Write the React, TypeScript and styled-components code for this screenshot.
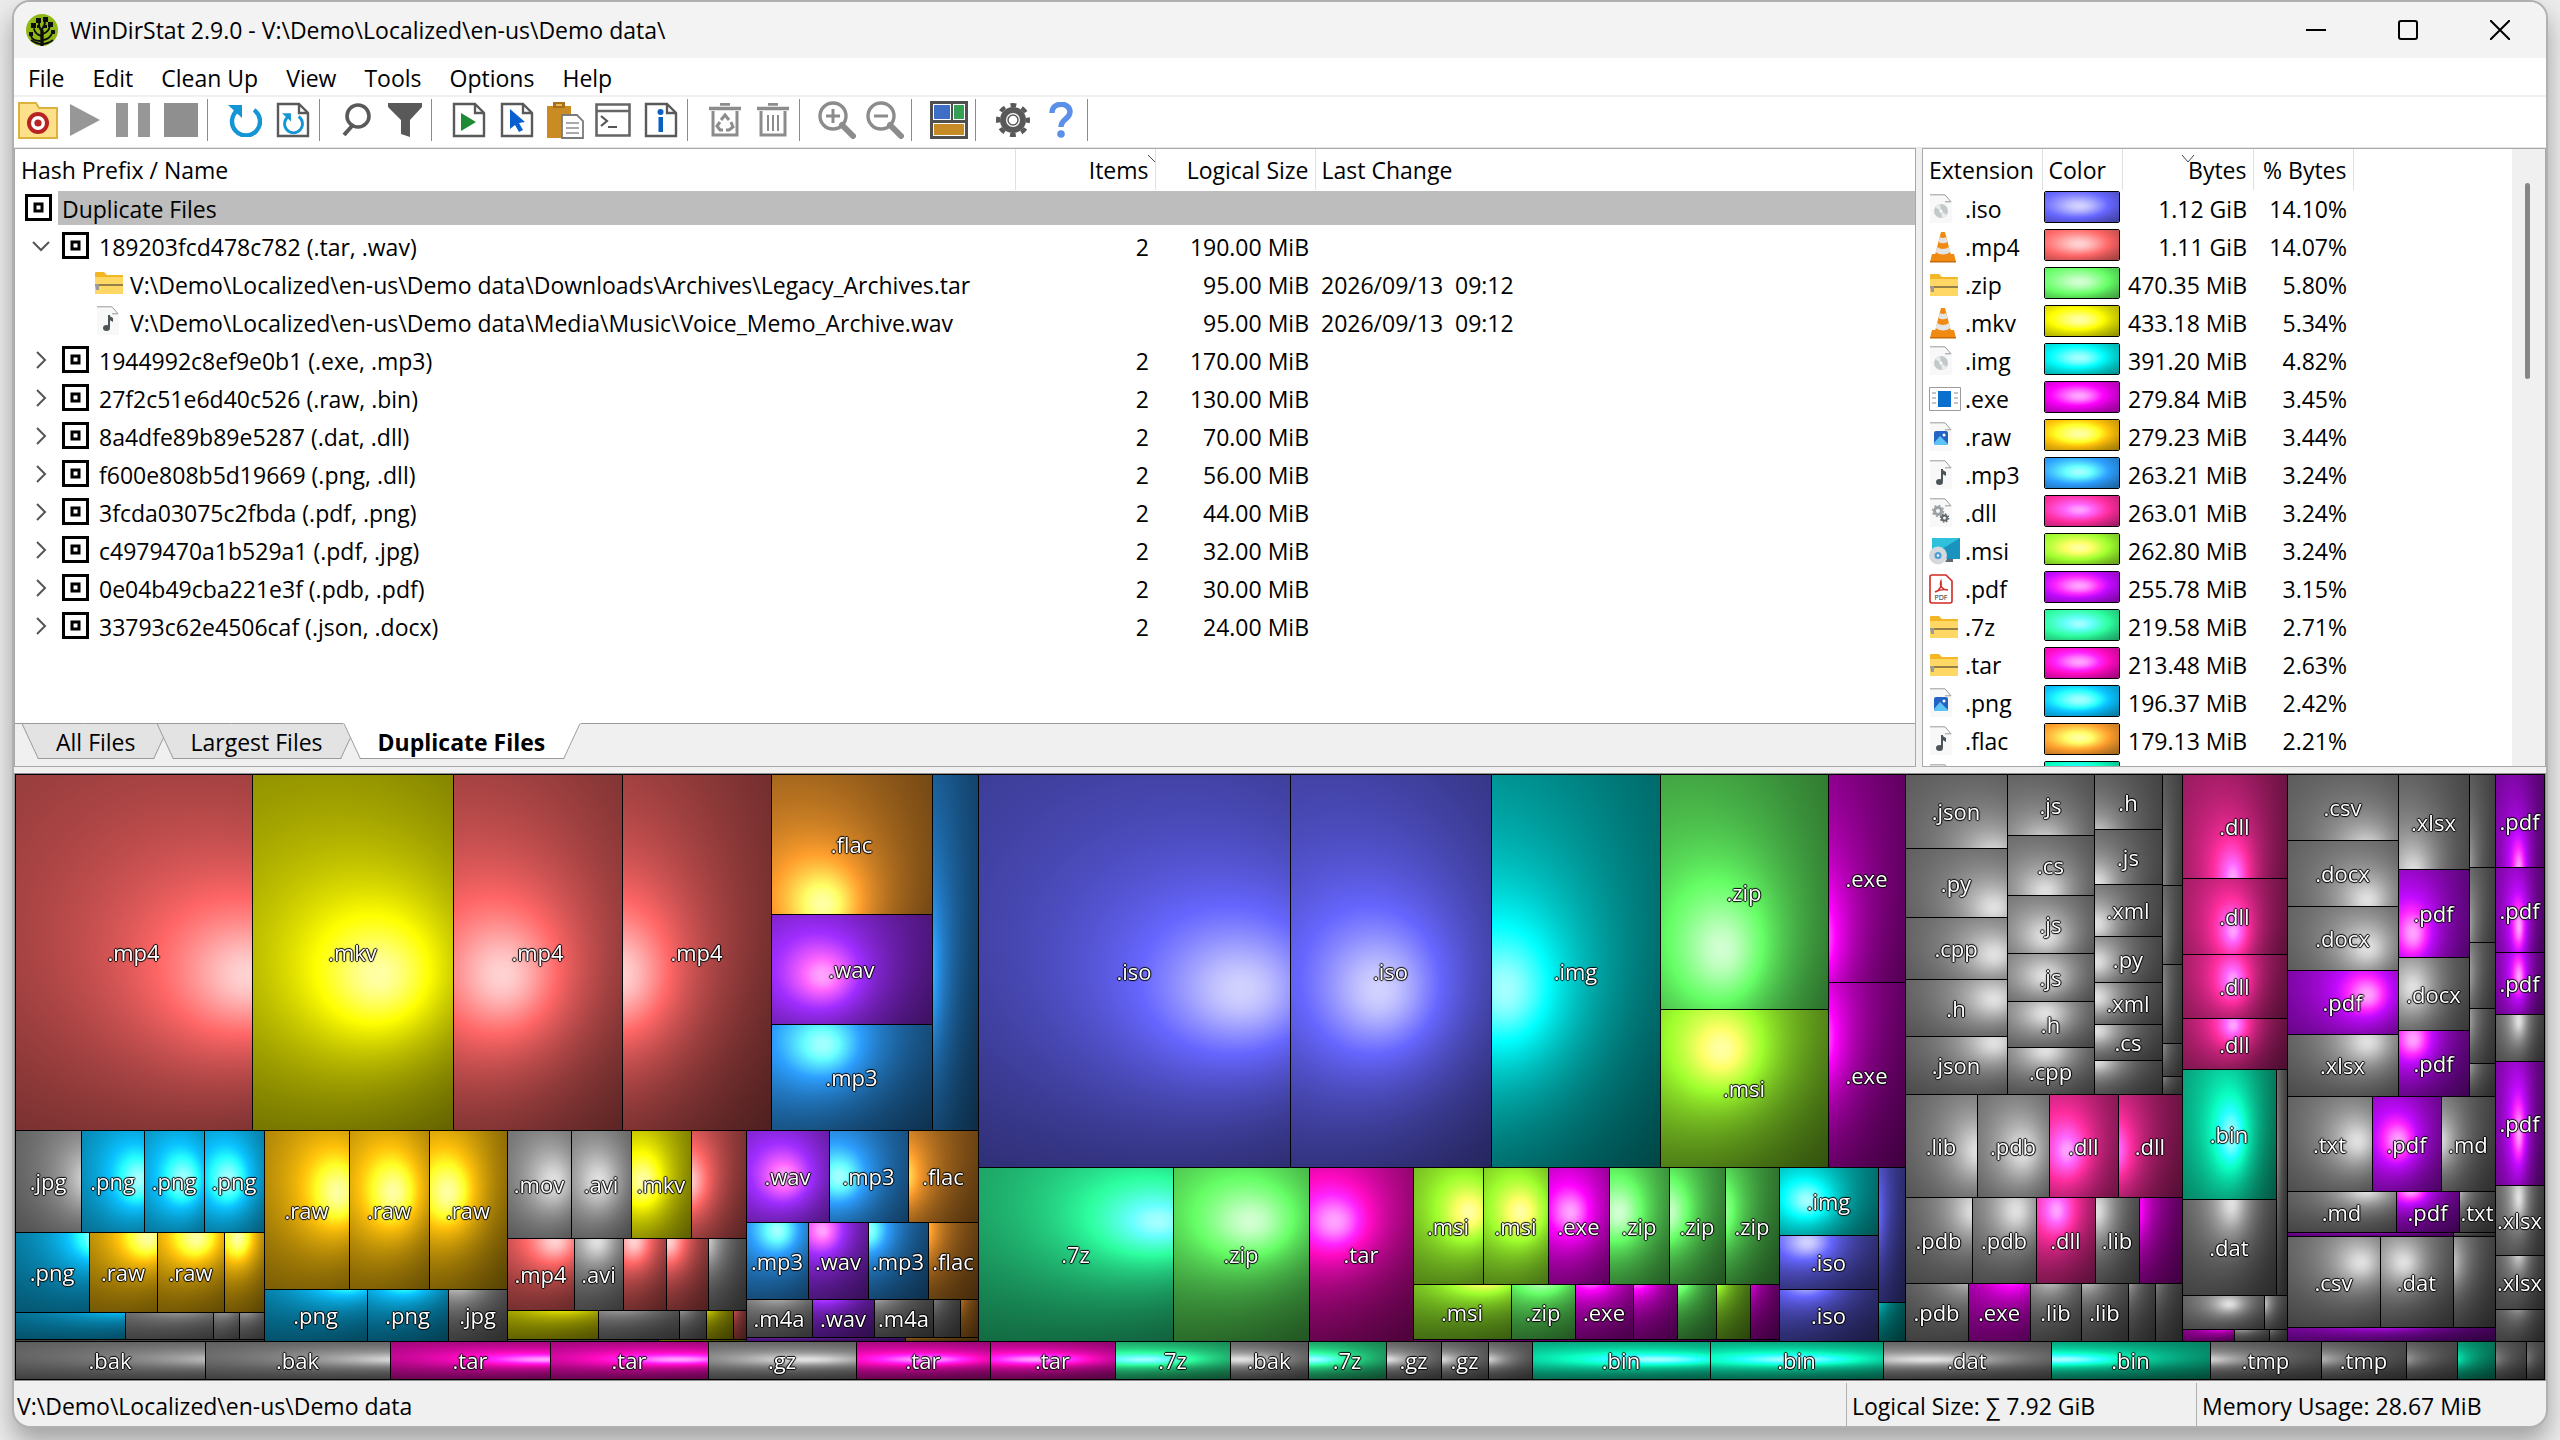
import React, { useLayoutEffect, useRef } from "react";
import styled, { createGlobalStyle, css } from "styled-components";

/* ---------- palette ---------- */

type RGB = [number, number, number];

const GREY: RGB = [153, 153, 153];

const EXT_COLORS: Record<string, RGB> = {
  iso: [102, 102, 255],
  mp4: [255, 102, 102],
  zip: [102, 255, 102],
  mkv: [230, 230, 0],
  img: [0, 230, 230],
  exe: [230, 0, 230],
  raw: [255, 194, 10],
  mp3: [45, 159, 255],
  dll: [255, 45, 159],
  msi: [159, 255, 45],
  pdf: [194, 10, 255],
  "7z": [45, 255, 159],
  tar: [255, 10, 194],
  png: [10, 194, 255],
  flac: [255, 159, 45],
  bin: [10, 255, 194],
  wav: [159, 45, 255],
};

const colorOf = (ext: string): RGB => EXT_COLORS[ext] ?? GREY;

/* ---------- cushion shading ---------- */

type Surface = [number, number, number, number];
type Box = { x: number; y: number; w: number; h: number };

const HEIGHT = 0.38;
const SCALE = 0.91;
const AMBIENT = 0.13;
const GAIN = 0.88 / 0.6;
const LIGHT_LEN = Math.sqrt(102);
const LX = -1 / LIGHT_LEN;
const LY = -1 / LIGHT_LEN;
const LZ = 10 / LIGHT_LEN;

function addRidge(s: Surface, b: Box, h: number): Surface {
  const wf = (4 * h) / b.w;
  const hf = (4 * h) / b.h;
  return [s[0] - wf, s[1] - hf, s[2] + wf * (2 * b.x + b.w), s[3] + hf * (2 * b.y + b.h)];
}

/* Spreads whatever exceeds 255 in one channel over the two others. */
function spill(c: RGB): RGB {
  const out: RGB = [c[0], c[1], c[2]];
  const top = out.indexOf(Math.max(...out));
  if (out[top] <= 255) return out;
  const half = (out[top] - 255) / 2;
  out[top] = 255;
  const a = (top + 1) % 3;
  const b = (top + 2) % 3;
  out[a] += half;
  out[b] += half;
  if (out[a] > 255) {
    out[b] += out[a] - 255;
    out[a] = 255;
  } else if (out[b] > 255) {
    out[a] += out[b] - 255;
    out[b] = 255;
  }
  return out;
}

function shade(data: Uint8ClampedArray, stride: number, b: Box, s: Surface, color: RGB) {
  for (let y = b.y; y < b.y + b.h; y++) {
    const ny = -(2 * s[1] * (y + 0.5) + s[3]);
    for (let x = b.x; x < b.x + b.w; x++) {
      const nx = -(2 * s[0] * (x + 0.5) + s[2]);
      const cosa = Math.min(1, Math.max(0, (nx * LX + ny * LY + LZ) / Math.sqrt(nx * nx + ny * ny + 1)));
      const p = ((1 - AMBIENT) * cosa + AMBIENT) * GAIN;
      const c = spill([color[0] * p, color[1] * p, color[2] * p]);
      const i = (y * stride + x) * 4;
      data[i] = c[0];
      data[i + 1] = c[1];
      data[i + 2] = c[2];
      data[i + 3] = 255;
    }
  }
}

/* ---------- treemap data ---------- */

type TreeNode = {
  kind: "leaf" | "strip" | "folder";
  size: number;
  ext?: string;
  label?: boolean;
  across?: boolean;
  children?: TreeNode[];
};

const file = (size: number, ext: string): TreeNode => ({ kind: "leaf", size, ext, label: true });
const tiny = (size: number, ext = ""): TreeNode => ({ kind: "leaf", size, ext });
const row = (size: number, ...children: TreeNode[]): TreeNode => ({ kind: "strip", size, across: true, children });
const column = (size: number, ...children: TreeNode[]): TreeNode => ({ kind: "strip", size, children });
const wideDir = (size: number, ...children: TreeNode[]): TreeNode => ({ kind: "folder", size, across: true, children });
const tallDir = (size: number, ...children: TreeNode[]): TreeNode => ({ kind: "folder", size, children });

const media = tallDir(
  963,
  row(
    356,
    wideDir(756, file(237, "mp4"), file(201, "mkv"), file(169, "mp4"), file(149, "mp4")),
    wideDir(207, column(161, file(140, "flac"), file(110, "wav"), file(106, "mp3")), tiny(46, "mp3")),
  ),
  row(
    211,
    tallDir(
      249,
      row(102, file(66, "jpg"), file(63, "png"), file(60, "png"), file(60, "png")),
      row(80, file(74, "png"), file(68, "raw"), file(67, "raw"), tiny(40, "raw")),
      row(27, tiny(110, "png"), tiny(88), tiny(26), tiny(25)),
      row(2, tiny(249)),
    ),
    tallDir(
      243,
      row(159, file(85, "raw"), file(80, "raw"), file(78, "raw")),
      row(52, file(103, "png"), file(81, "png"), file(59, "jpg")),
    ),
    tallDir(
      239,
      row(108, file(64, "mov"), file(60, "avi"), file(60, "mkv"), tiny(55, "mp4")),
      row(72, file(67, "mp4"), file(49, "avi"), tiny(43, "mp4"), tiny(42, "mp4"), tiny(38)),
      row(29, tiny(91, "mkv"), tiny(81), tiny(27), tiny(27, "mkv"), tiny(13, "mp4")),
      row(2, tiny(151), tiny(88, "mkv")),
    ),
    tallDir(
      232,
      row(92, file(83, "wav"), file(79, "mp3"), file(70, "flac")),
      row(77, file(62, "mp3"), file(60, "wav"), file(60, "mp3"), file(50, "flac")),
      row(38, file(66, "m4a"), file(62, "wav"), file(59, "m4a"), tiny(27), tiny(18, "flac")),
      row(4, tiny(159, "wav"), tiny(73, "flac")),
    ),
  ),
);

const software = tallDir(
  927,
  row(
    393,
    wideDir(682, file(312, "iso"), file(201, "iso"), file(169, "img")),
    wideDir(
      245,
      column(168, file(235, "zip"), file(158, "msi")),
      column(77, file(208, "exe"), file(185, "exe")),
    ),
  ),
  row(
    174,
    wideDir(435, file(195, "7z"), file(136, "zip"), file(104, "tar")),
    tallDir(
      366,
      row(117, file(70, "msi"), file(65, "msi"), file(61, "exe"), file(60, "zip"), file(56, "zip"), file(54, "zip")),
      row(55, file(98, "msi"), file(64, "zip"), file(58, "exe"), tiny(44, "exe"), tiny(39, "zip"), tiny(34, "msi"), tiny(29, "exe")),
      row(2, tiny(366, "exe")),
    ),
    wideDir(
      126,
      column(99, file(68, "img"), file(54, "iso"), file(52, "iso")),
      column(27, tiny(135, "iso"), tiny(39, "img")),
    ),
  ),
);

const development = tallDir(
  277,
  wideDir(
    320,
    column(102, file(74, "json"), file(69, "py"), file(62, "cpp"), file(57, "h"), file(58, "json")),
    column(87, file(61, "js"), file(60, "cs"), file(58, "js"), file(48, "js"), file(46, "h"), file(47, "cpp")),
    column(68, file(55, "h"), file(55, "js"), file(52, "xml"), file(46, "py"), file(42, "xml"), file(36, "cs"), tiny(34)),
    column(20, tiny(111), tiny(79), tiny(79), tiny(33), tiny(18)),
  ),
  tallDir(
    247,
    row(103, file(72, "lib"), file(72, "pdb"), file(69, "dll"), file(64, "dll")),
    row(86, file(67, "pdb"), file(64, "pdb"), file(59, "dll"), file(44, "lib"), tiny(43, "exe")),
    row(58, file(63, "pdb"), file(62, "exe"), file(51, "lib"), file(47, "lib"), tiny(27), tiny(27)),
  ),
);

const system = tallDir(
  105,
  tallDir(295, file(104, "dll"), file(76, "dll"), file(64, "dll"), file(51, "dll")),
  wideDir(226, column(94, file(130, "bin"), file(96, "dat")), tiny(11)),
  tallDir(46, row(34, tiny(82), tiny(23)), row(12, tiny(52, "exe"), tiny(35), tiny(18))),
);

const documents = tallDir(
  208,
  wideDir(
    322,
    column(111, file(66, "csv"), file(66, "docx"), file(64, "docx"), file(64, "pdf"), file(62, "xlsx")),
    column(71, file(95, "xlsx"), file(88, "pdf"), file(73, "docx"), file(66, "pdf")),
    column(26, tiny(93), tiny(75), tiny(66), tiny(55), tiny(33)),
  ),
  tallDir(
    140,
    row(95, file(85, "txt"), file(69, "pdf"), file(54, "md")),
    row(41, file(109, "md"), file(63, "pdf"), file(36, "txt")),
    row(4, tiny(166, "pdf"), tiny(42)),
  ),
  tallDir(105, row(91, file(93, "csv"), file(73, "dat"), tiny(42)), row(14, tiny(208, "pdf"))),
);

const reports = tallDir(
  49,
  tallDir(287, file(93, "pdf"), file(85, "pdf"), file(62, "pdf"), tiny(47)),
  tallDir(280, file(124, "pdf"), file(70, "xlsx"), file(54, "xlsx"), tiny(32)),
);

const archives = wideDir(
  38,
  wideDir(
    1517,
    file(190, "bak"),
    file(185, "bak"),
    file(160, "tar"),
    file(158, "tar"),
    file(148, "gz"),
    file(134, "tar"),
    file(125, "tar"),
    file(115, "7z"),
    file(78, "bak"),
    file(78, "7z"),
    file(55, "gz"),
    file(47, "gz"),
    tiny(44),
  ),
  wideDir(
    1012,
    file(178, "bin"),
    file(173, "bin"),
    file(168, "dat"),
    file(159, "bin"),
    file(111, "tmp"),
    file(85, "tmp"),
    tiny(51),
    tiny(38, "bin"),
    tiny(31),
    tiny(18),
  ),
);

const TREE: TreeNode[] = [row(567, media, software, development, system, documents, reports), archives];

/* ---------- list data ---------- */

type Entry = {
  name: string;
  icon: "group" | "zip" | "music";
  level: 0 | 1 | 2;
  open?: boolean;
  items?: string;
  size?: string;
  changed?: string;
};

const group = (name: string, size: string, open = false): Entry => ({ name, icon: "group", level: 1, open, items: "2", size });

const ENTRIES: Entry[] = [
  { name: "Duplicate Files", icon: "group", level: 0 },
  group("189203fcd478c782 (.tar, .wav)", "190.00 MiB", true),
  {
    name: "V:\\Demo\\Localized\\en-us\\Demo data\\Downloads\\Archives\\Legacy_Archives.tar",
    icon: "zip",
    level: 2,
    size: "95.00 MiB",
    changed: "2026/09/13  09:12",
  },
  {
    name: "V:\\Demo\\Localized\\en-us\\Demo data\\Media\\Music\\Voice_Memo_Archive.wav",
    icon: "music",
    level: 2,
    size: "95.00 MiB",
    changed: "2026/09/13  09:12",
  },
  group("1944992c8ef9e0b1 (.exe, .mp3)", "170.00 MiB"),
  group("27f2c51e6d40c526 (.raw, .bin)", "130.00 MiB"),
  group("8a4dfe89b89e5287 (.dat, .dll)", "70.00 MiB"),
  group("f600e808b5d19669 (.png, .dll)", "56.00 MiB"),
  group("3fcda03075c2fbda (.pdf, .png)", "44.00 MiB"),
  group("c4979470a1b529a1 (.pdf, .jpg)", "32.00 MiB"),
  group("0e04b49cba221e3f (.pdb, .pdf)", "30.00 MiB"),
  group("33793c62e4506caf (.json, .docx)", "24.00 MiB"),
];

type ExtIcon = "disc" | "vlc" | "zip" | "exe" | "picture" | "music" | "gears" | "msi" | "pdf";

const EXTENSIONS: [string, ExtIcon, string, string][] = [
  ["iso", "disc", "1.12 GiB", "14.10%"],
  ["mp4", "vlc", "1.11 GiB", "14.07%"],
  ["zip", "zip", "470.35 MiB", "5.80%"],
  ["mkv", "vlc", "433.18 MiB", "5.34%"],
  ["img", "disc", "391.20 MiB", "4.82%"],
  ["exe", "exe", "279.84 MiB", "3.45%"],
  ["raw", "picture", "279.23 MiB", "3.44%"],
  ["mp3", "music", "263.21 MiB", "3.24%"],
  ["dll", "gears", "263.01 MiB", "3.24%"],
  ["msi", "msi", "262.80 MiB", "3.24%"],
  ["pdf", "pdf", "255.78 MiB", "3.15%"],
  ["7z", "zip", "219.58 MiB", "2.71%"],
  ["tar", "zip", "213.48 MiB", "2.63%"],
  ["png", "picture", "196.37 MiB", "2.42%"],
  ["flac", "music", "179.13 MiB", "2.21%"],
  ["bin", "disc", "", ""],
];

/* ---------- styles ---------- */

const GlobalStyle = createGlobalStyle`
  *, *::before, *::after { box-sizing: border-box; }
  body {
    margin: 0;
    background: #ececec;
    color: #000;
    font: 23px/30px "Open Sans", "Noto Sans", sans-serif;
    overflow: hidden;
  }
  button { font: inherit; color: inherit; background: none; border: 0; padding: 0; }
  table { border-collapse: collapse; border-spacing: 0; table-layout: fixed; }
  th { font-weight: 400; }
  svg { display: block; flex: none; }
`;

const Desktop = styled.div`
  height: 100vh;
  padding: 0 12px 12px;
`;

const Window = styled.main`
  display: flex;
  flex-direction: column;
  height: 100%;
  border: 2px solid #b0b0b0;
  border-radius: 18px;
  background: #f0f0f0;
  box-shadow: 0 14px 26px rgba(0, 0, 0, 0.32);
  overflow: hidden;
`;

const TitleBar = styled.header`
  display: flex;
  align-items: center;
  gap: 12px;
  height: 56px;
  padding-left: 12px;
  background: #f3f3f3;
`;

const Title = styled.h1`
  flex: 1;
  margin: 0;
  font-size: 23px;
  font-weight: 400;
`;

const CaptionButtons = styled.div`
  display: flex;
`;

const CaptionButton = styled.button`
  display: grid;
  place-items: center;
  width: 92px;
  height: 56px;
`;

const MenuBar = styled.nav`
  display: flex;
  height: 39px;
  background: #fff;
  border-bottom: 2px solid #f0f0f0;
`;

const MenuItem = styled.button`
  padding: 2px 14px 0;
`;

const Toolbar = styled.div`
  display: flex;
  align-items: center;
  height: 51px;
  padding-bottom: 4px;
  background: #fff;
  border-bottom: 1px solid #e6e6e6;
`;

const ToolButton = styled.button`
  display: grid;
  place-items: center;
  width: 48px;
  height: 46px;
  &:first-child {
    width: 47px;
  }
`;

const Divider = styled.span`
  width: 16px;
  height: 42px;
  padding-left: 2px;
  &::before {
    content: "";
    display: block;
    width: 1px;
    height: 100%;
    background: #8c8c8c;
  }
`;

const Workspace = styled.div`
  flex: 1;
  display: grid;
  grid-template-rows: minmax(0, 619fr) minmax(0, 608fr);
  gap: 6px;
  min-height: 0;
`;

const Panes = styled.div`
  display: grid;
  grid-template-columns: 1902fr 624fr;
  gap: 6px;
  min-height: 0;
`;

const Pane = styled.section`
  display: flex;
  flex-direction: column;
  min-width: 0;
  min-height: 0;
  border: 1px solid #a8a8a8;
  background: #fff;
  overflow: hidden;
`;

const ListArea = styled.div`
  flex: 1;
  min-height: 0;
  overflow: hidden;
`;

const Table = styled.table`
  width: 100%;
`;

const Col = styled.col<{ $width?: number }>`
  width: ${(p) => (p.$width ? `${p.$width}px` : "auto")};
`;

const Head = styled.th<{ $right?: boolean }>`
  position: relative;
  height: 41px;
  padding: 1px 6px 0;
  text-align: ${(p) => (p.$right ? "right" : "left")};
  border-right: 1px solid #e0e0e0;
  white-space: nowrap;
  &:last-child { border-right-color: ${(p) => (p.$right ? "#e0e0e0" : "transparent")}; }
`;

const SortMark = styled.svg<{ $at: string }>`
  position: absolute;
  top: 6px;
  left: ${(p) => p.$at};
`;

const Cell = styled.td<{ $right?: boolean; $selected?: boolean }>`
  height: 38px;
  padding: 0 6px;
  text-align: ${(p) => (p.$right ? "right" : "left")};
  white-space: pre;
  ${(p) =>
    p.$selected &&
    css`
      background: linear-gradient(#bdbdbd, #bdbdbd) 0 1px / 100% 34px no-repeat;
    `}
`;

const NameCell = styled(Cell)`
  padding: 0;
`;

const NameLine = styled.div<{ $level: number }>`
  display: flex;
  align-items: center;
  height: 38px;
  padding-left: ${(p) => [9, 9, 79][p.$level]}px;
`;

const Toggle = styled.button`
  display: grid;
  place-items: center;
  width: 37px;
  height: 30px;
  padding: 0 3px 2px 0;
`;

const IconSlot = styled.span<{ $wide?: boolean }>`
  display: grid;
  place-items: center;
  width: 28px;
  margin-right: ${(p) => (p.$wide ? 10 : 8)}px;
  padding-bottom: 4px;
`;

const NameText = styled.span<{ $selected?: boolean }>`
  ${(p) =>
    p.$selected &&
    css`
      flex: 1;
      height: 34px;
      margin: -2px 0 0 -4px;
      padding: 3px 0 0 4px;
      background: #bdbdbd;
    `}
`;

const Tabs = styled.div`
  display: flex;
  gap: 19px;
  height: 43px;
  padding-left: 23px;
  border-top: 1px solid #9a9a9a;
  background: #f0f0f0;
`;

const Tab = styled.button<{ $active?: boolean }>`
  position: relative;
  isolation: isolate;
  height: 36px;
  margin-top: -1px;
  padding: 2px 18px 0;
  font-weight: ${(p) => (p.$active ? 700 : 400)};
  &::before,
  &::after {
    content: "";
    position: absolute;
    z-index: -1;
    top: 0;
    bottom: 0;
    background: ${(p) => (p.$active ? "#fff" : "#e3e3e3")};
    border: 1px solid #9a9a9a;
    border-top-color: ${(p) => (p.$active ? "#fff" : "#9a9a9a")};
    transform-origin: bottom;
  }
  &::before {
    left: 0;
    right: 25%;
    border-right: 0;
    transform: skewX(25deg);
  }
  &::after {
    left: 25%;
    right: 0;
    border-left: 0;
    transform: skewX(-25deg);
  }
`;

const ExtBody = styled.div`
  flex: 1;
  display: flex;
  min-height: 0;
`;

const ExtTable = styled.table`
  width: 430px;
`;

const ExtScroller = styled.div`
  flex: 1;
  overflow: hidden;
`;

const ScrollTrack = styled.div`
  width: 33px;
  padding: 34px 13px 0;
  background: #f0f0f0;
`;

const ScrollThumb = styled.div`
  width: 5px;
  height: 196px;
  border-radius: 3px;
  background: #868686;
`;

const ExtName = styled.div`
  display: grid;
  grid-template-columns: 34px 1fr;
  align-items: center;
  gap: 2px;
`;

const Swatch = styled.canvas`
  display: block;
  width: 76px;
  height: 32px;
  margin-top: -4px;
  border: 1px solid #000;
  border-radius: 2px;
`;

const SwatchCell = styled(Cell)`
  padding: 0 2px;
`;

const MapFrame = styled.section`
  position: relative;
  min-height: 0;
  border: 1px solid #8f8f8f;
  padding: 0 1px 1px 0;
  background: #000;
`;

const MapCanvas = styled.canvas`
  position: absolute;
  inset: 0;
`;

const MapTree = styled.div`
  position: relative;
  display: flex;
  flex-direction: column;
  width: 100%;
  height: 100%;
`;

const Branch = styled.div<{ $size: number; $across?: boolean }>`
  display: flex;
  flex: ${(p) => p.$size} 1 0;
  flex-direction: ${(p) => (p.$across ? "row" : "column")};
  min-width: 0;
  min-height: 0;
`;

const Leaf = styled.div<{ $size: number }>`
  display: flex;
  align-items: center;
  justify-content: center;
  flex: ${(p) => p.$size} 1 0;
  min-width: 0;
  min-height: 0;
  overflow: hidden;
  color: #fff;
  font-size: 22px;
  text-shadow: 1px 0 1px #000, -1px 0 1px #000, 0 1px 1px #000, 0 -1px 1px #000;
`;

const StatusBar = styled.footer`
  display: grid;
  grid-template-columns: 1fr 350px 350px;
  height: 45px;
  padding-top: 2px;
`;

const StatusCell = styled.span<{ $line?: boolean }>`
  padding: 8px 0 0 ${(p) => (p.$line ? 5 : 3)}px;
  border-left: ${(p) => (p.$line ? "1px solid #b0b0b0" : "0")};
`;

/* ---------- icons ---------- */

const LogoIcon = () => (
  <svg width="32" height="32" viewBox="0 0 32 32">
    <circle cx="16" cy="16" r="16" fill="#8fb816" />
    <g fill="none" stroke="#0d0d0d" strokeLinecap="round">
      <path d="M16 31V17" strokeWidth="3.4" />
      <path d="M16 22c-5-1-7-3-8-7M16 20c5-1 7-4 8-8M16 17c-3-2-3-5-3-9M16 15c2-2 3-5 3-8M16 26c5 0 9-3 10-7M14 27c-5 0-8-2-9-5" strokeWidth="1.8" />
    </g>
    <g fill="#0d0d0d">
      <rect x="5" y="9" width="5" height="5" />
      <rect x="10" y="4" width="5" height="5" />
      <rect x="17" y="3" width="5" height="5" />
      <rect x="22" y="8" width="5" height="5" />
      <rect x="3" y="18" width="4" height="4" />
      <rect x="25" y="16" width="4" height="4" />
      <rect x="11" y="11" width="3" height="3" />
      <rect x="18" y="11" width="3" height="3" />
    </g>
    <path d="M5 26q11 8 22 0" fill="none" stroke="#0d0d0d" strokeWidth="1.6" />
  </svg>
);

const Sheet = ({ children }: { children?: React.ReactNode }) => (
  <svg width="34" height="36" viewBox="0 0 34 36">
    <path d="M2 2h21l9 9v23H2z" fill="#fff" stroke="#595959" strokeWidth="2.4" />
    <path d="M23 2v9h9" fill="none" stroke="#595959" strokeWidth="2.4" />
    {children}
  </svg>
);

const RefreshArrow = () => (
  <>
    <path d="M10 7A14 14 0 1 0 26 7" fill="none" stroke="#1496d6" strokeWidth="4.4" />
    <path d="M0 2h14v13z" fill="#1496d6" />
  </>
);

const TOOL_ICONS: Record<string, React.ReactNode> = {
  "Open folder": (
    <svg width="40" height="38" viewBox="0 0 40 38">
      <path d="M1 2h17l3 5h18v30H1z" fill="#ffe08a" stroke="#dcb13c" strokeWidth="2" />
      <circle cx="20" cy="22" r="11" fill="#b92222" />
      <circle cx="20" cy="22" r="7" fill="#fff" />
      <circle cx="20" cy="22" r="3.6" fill="#b92222" />
    </svg>
  ),
  Resume: (
    <svg width="30" height="32" viewBox="0 0 30 32">
      <path d="M0 0l30 16L0 32z" fill="#979797" />
    </svg>
  ),
  Pause: (
    <svg width="34" height="34" viewBox="0 0 34 34">
      <path d="M0 0h12v34H0zM22 0h12v34H22z" fill="#979797" />
    </svg>
  ),
  Stop: (
    <svg width="34" height="34" viewBox="0 0 34 34">
      <path d="M0 0h34v34H0z" fill="#8f8f8f" />
    </svg>
  ),
  "Refresh all": (
    <svg width="34" height="34" viewBox="0 0 34 34">
      <RefreshArrow />
    </svg>
  ),
  "Refresh selected": (
    <Sheet>
      <g transform="translate(6 10) scale(.64)">
        <RefreshArrow />
      </g>
    </Sheet>
  ),
  Search: (
    <svg width="30" height="34" viewBox="0 0 30 34">
      <circle cx="16" cy="13" r="11" fill="none" stroke="#595959" strokeWidth="3.6" />
      <path d="M10 23L2 32" stroke="#595959" strokeWidth="4" />
    </svg>
  ),
  Filter: (
    <svg width="34" height="34" viewBox="0 0 34 34">
      <path d="M0 0h34v4L22 17v17l-9-3V17L0 4z" fill="#595959" />
    </svg>
  ),
  Open: (
    <Sheet>
      <path d="M9 11l15 9-15 9z" fill="#1f8a35" />
    </Sheet>
  ),
  Select: (
    <Sheet>
      <path d="M10 7v20l5-4 4 7 4-2-4-7 6-1z" fill="#0a5fd0" />
    </Sheet>
  ),
  Copy: (
    <svg width="38" height="38" viewBox="0 0 38 38">
      <path d="M1 5h24v32H1z" fill="#c98b22" />
      <path d="M7 1h12v6H7z" fill="#a8701a" />
      <path d="M10 3h6v2h-6z" fill="#e6b85a" />
      <path d="M16 14h15l6 6v17H16z" fill="#fff" stroke="#7a7a7a" strokeWidth="1.8" />
      <path d="M20 22h13M20 27h13M20 32h13" stroke="#a9a9a9" strokeWidth="1.8" />
    </svg>
  ),
  "Command prompt": (
    <svg width="36" height="34" viewBox="0 0 36 34">
      <path d="M1.5 1.5h33v31h-33zM1.5 8h33" fill="#fff" stroke="#666" strokeWidth="2.6" />
      <path d="M6 13l6 5-6 5M13 24h9" fill="none" stroke="#555" strokeWidth="2.2" />
    </svg>
  ),
  Properties: (
    <Sheet>
      <circle cx="16.5" cy="10" r="3" fill="#0a5fbf" />
      <path d="M14.5 15H19v15h-4.5z" fill="#0a5fbf" />
    </Sheet>
  ),
  "Delete to recycle bin": (
    <svg width="34" height="34" viewBox="0 0 34 34">
      <path d="M12 1h10M1 5.5h32" stroke="#8c8c8c" strokeWidth="3.5" />
      <path d="M5 8v24h24V8" fill="none" stroke="#8c8c8c" strokeWidth="3" />
      <path d="M13 17l4-5 4 5M23 19l2 5-4 3h-3M15 27h-3l-3-4 3-4" fill="none" stroke="#8c8c8c" strokeWidth="3" />
    </svg>
  ),
  Delete: (
    <svg width="34" height="34" viewBox="0 0 34 34">
      <path d="M12 1h10M1 5.5h32" stroke="#8c8c8c" strokeWidth="3.5" />
      <path d="M5 8v24h24V8" fill="none" stroke="#8c8c8c" strokeWidth="3" />
      <path d="M12 12v16M17 12v16M22 12v16" stroke="#8c8c8c" strokeWidth="2" />
    </svg>
  ),
  "Zoom in": (
    <svg width="38" height="38" viewBox="0 0 38 38">
      <circle cx="15" cy="15" r="13" fill="none" stroke="#8c8c8c" strokeWidth="3.4" />
      <path d="M15 8v14M8 15h14" stroke="#8c8c8c" strokeWidth="3" />
      <path d="M24 24l11 11" stroke="#8c8c8c" strokeWidth="6" strokeLinecap="round" />
    </svg>
  ),
  "Zoom out": (
    <svg width="38" height="38" viewBox="0 0 38 38">
      <circle cx="15" cy="15" r="13" fill="none" stroke="#8c8c8c" strokeWidth="3.4" />
      <path d="M8 15h14" stroke="#8c8c8c" strokeWidth="3" />
      <path d="M24 24l11 11" stroke="#8c8c8c" strokeWidth="6" strokeLinecap="round" />
    </svg>
  ),
  "Show treemap": (
    <svg width="38" height="38" viewBox="0 0 38 38">
      <path d="M0 0h38v38H0z" fill="#4f4f4f" />
      <path d="M3 3h18v16H3zM23 3h12v16H23zM3 22h32v13H3z" fill="#fff" />
      <path d="M4 4h16v14H4z" fill="#3f6fc4" />
      <path d="M24 4h10v14H24z" fill="#35a055" />
      <path d="M4 23h30v11H4z" fill="#c68a27" />
    </svg>
  ),
  Settings: (
    <svg width="34" height="34" viewBox="0 0 34 34">
      <circle cx="17" cy="17" r="15" fill="none" stroke="#595959" strokeWidth="4" strokeDasharray="5.9 5.88" strokeDashoffset="3" />
      <circle cx="17" cy="17" r="13" fill="#595959" />
      <circle cx="17" cy="17" r="7" fill="#fff" />
      <circle cx="17" cy="17" r="5" fill="none" stroke="#595959" strokeWidth="1.5" />
    </svg>
  ),
  Help: (
    <svg width="24" height="36" viewBox="0 0 24 36">
      <path d="M3 11c0-12 18-11 18-1 0 7-9 7-9 15" fill="none" stroke="#5b8fe8" strokeWidth="5.4" />
      <circle cx="12" cy="32" r="3.8" fill="#5b8fe8" />
    </svg>
  ),
};

const TOOL_GROUPS: string[][] = [
  ["Open folder", "Resume", "Pause", "Stop"],
  ["Refresh all", "Refresh selected"],
  ["Search", "Filter"],
  ["Open", "Select", "Copy", "Command prompt", "Properties"],
  ["Delete to recycle bin", "Delete"],
  ["Zoom in", "Zoom out"],
  ["Show treemap"],
  ["Settings", "Help"],
];

const GroupIcon = () => (
  <svg width="27" height="27" viewBox="0 0 27 27">
    <path d="M1.5 1.5h24v24h-24z" fill="#fff" stroke="#000" strokeWidth="3" />
    <path d="M10 10h7v7h-7z" fill="#fff" stroke="#000" strokeWidth="3" />
  </svg>
);

const ZipIcon = () => (
  <svg width="30" height="24" viewBox="0 0 30 24">
    <path d="M1 2q0-1 1-1h8l3 3h15q1 0 1 1v17q0 1-1 1H2q-1 0-1-1z" fill="#f3b625" />
    <path d="M1 6h28v16q0 1-1 1H2q-1 0-1-1z" fill="#ffd765" />
    <path d="M1 14h28" stroke="#7a6a43" strokeWidth="1.6" />
    <path d="M1 13h4v6H2z" fill="#9a9a9a" />
  </svg>
);

const Paper = ({ children }: { children?: React.ReactNode }) => (
  <svg width="24" height="30" viewBox="0 0 24 30">
    <path d="M1 1h16l6 7v21H1z" fill="#f8f8f9" />
    <path d="M1 .8h15l6 7h-6" fill="none" stroke="#9a9a9a" />
    {children}
  </svg>
);

const MusicIcon = () => (
  <Paper>
    <path d="M13 9v12" stroke="#4d5458" strokeWidth="2" />
    <path d="M12 9l5 3v4l-5-3z" fill="#4d5458" />
    <ellipse cx="10.5" cy="22" rx="3.5" ry="3" fill="#4d5458" />
  </Paper>
);

const EXT_ICONS: Record<ExtIcon, React.ReactNode> = {
  zip: <ZipIcon />,
  music: <MusicIcon />,
  disc: (
    <Paper>
      <circle cx="12" cy="17" r="7" fill="#c3c8ca" />
      <path d="M12 17L6 13a7 7 0 0 1 5-3zM12 17l6 4a7 7 0 0 1-5 3z" fill="#e8ebec" />
      <circle cx="12" cy="17" r="1.5" fill="#fff" />
    </Paper>
  ),
  picture: (
    <Paper>
      <rect x="5" y="9" width="14" height="14" rx="2" fill="#2463c4" />
      <path d="M5 21l6-7 8 8q0 1-2 1H7q-2 0-2-2z" fill="#5cc3f5" />
      <circle cx="15" cy="13" r="1.5" fill="#fff" />
    </Paper>
  ),
  gears: (
    <Paper>
      <circle cx="9" cy="13" r="3.5" fill="none" stroke="#9aa0a4" strokeWidth="3" />
      <circle cx="9" cy="13" r="5.5" fill="none" stroke="#9aa0a4" strokeWidth="1.5" strokeDasharray="2 2.3" />
      <circle cx="15.5" cy="20" r="2.5" fill="none" stroke="#60666a" strokeWidth="2" />
      <circle cx="15.5" cy="20" r="4" fill="none" stroke="#60666a" strokeWidth="1.5" strokeDasharray="1.6 1.54" />
    </Paper>
  ),
  vlc: (
    <svg width="28" height="32" viewBox="0 0 28 32">
      <path d="M3 23h22l2 8H1z" fill="#f08a12" />
      <path d="M1 30h26v1.5H1z" fill="#c96a08" />
      <path d="M12 1h4l6 23q-8 5-16 0z" fill="#f08a12" />
      <path d="M11 6q3 2 6 0l1.5 5q-4.5 2.5-9 0zM8 16q6 4 12 0l1.5 5q-7.5 5-15 0z" fill="#e4e4e4" />
    </svg>
  ),
  exe: (
    <svg width="32" height="24" viewBox="0 0 32 24">
      <path d="M.5.5h31v23H.5z" fill="#fff" stroke="#9b9b9b" />
      <path d="M9 4h13v16H9z" fill="#0b6fce" />
      <path d="M3 6h4M3 11h4M3 16h4M25 6h4M25 11h4M25 16h4" stroke="#8b8b8b" />
    </svg>
  ),
  msi: (
    <svg width="32" height="28" viewBox="0 0 32 28">
      <path d="M3 1h28v21H3z" fill="#1a93bf" />
      <path d="M3 1h28L3 18z" fill="#2fc1dc" />
      <path d="M18 22h6v3h-8z" fill="#5f6a70" />
      <circle cx="9" cy="18.5" r="9" fill="#d5d9dc" />
      <circle cx="9" cy="18.5" r="3.5" fill="#4a9fd8" />
      <circle cx="9" cy="18.5" r="1.2" fill="#fff" />
    </svg>
  ),
  pdf: (
    <svg width="24" height="30" viewBox="0 0 24 30">
      <path d="M3 1h14l6 6v20q0 2-2 2H3q-2 0-2-2V3q0-2 2-2z" fill="#fff" stroke="#d02a20" strokeWidth="1.6" />
      <path d="M6 18c5-2 7-6 6-11-2 5 2 9 7 9-5-1-9 0-13 2z" fill="none" stroke="#d02a20" strokeWidth="1.4" />
      <text x="12" y="26" textAnchor="middle" fontSize="7" fontFamily="Open Sans, sans-serif" fill="#222">
        PDF
      </text>
    </svg>
  ),
};

const ENTRY_ICONS = { group: <GroupIcon />, zip: <ZipIcon />, music: <MusicIcon /> };

/* ---------- components ---------- */

const TreeItem = ({ node }: { node: TreeNode }) =>
  node.kind === "leaf" ? (
    <Leaf $size={node.size} data-kind="leaf" data-ext={node.ext}>
      {node.label ? `.${node.ext}` : null}
    </Leaf>
  ) : (
    <Branch $size={node.size} $across={node.across} data-kind={node.kind}>
      {node.children!.map((child, i) => (
        <TreeItem key={i} node={child} />
      ))}
    </Branch>
  );

function Treemap() {
  const frame = useRef<HTMLElement>(null);
  const canvas = useRef<HTMLCanvasElement>(null);
  const tree = useRef<HTMLDivElement>(null);

  useLayoutEffect(() => {
    const paint = () => {
      const cv = canvas.current!;
      const origin = tree.current!.getBoundingClientRect();
      const width = Math.round(origin.width);
      const height = Math.round(origin.height);
      if (!width || !height) return;
      cv.width = width;
      cv.height = height;
      const ctx = cv.getContext("2d")!;
      const image = ctx.createImageData(width, height);

      const visit = (el: Element, surface: Surface, h: number) => {
        for (const child of Array.from(el.children) as HTMLElement[]) {
          const kind = child.dataset.kind;
          if (kind === "strip") {
            visit(child, surface, h);
            continue;
          }
          const r = child.getBoundingClientRect();
          const x = Math.round(r.left - origin.left);
          const y = Math.round(r.top - origin.top);
          const box = {
            x,
            y,
            w: Math.round(r.right - origin.left) - x,
            h: Math.round(r.bottom - origin.top) - y,
          };
          if (box.w < 1 || box.h < 1) continue;
          const next = addRidge(surface, box, h);
          if (kind === "folder") visit(child, next, h * SCALE);
          else {
            const inner = { x: x + 1, y: y + 1, w: box.w - 1, h: box.h - 1 };
            shade(image.data, width, inner, next, colorOf(child.dataset.ext ?? ""));
          }
        }
      };

      visit(tree.current!, [0, 0, 0, 0], HEIGHT * SCALE);
      ctx.putImageData(image, 0, 0);
    };
    paint();
    const observer = new ResizeObserver(paint);
    observer.observe(frame.current!);
    return () => observer.disconnect();
  }, []);

  return (
    <MapFrame ref={frame} aria-label="Treemap">
      <MapCanvas ref={canvas} />
      <MapTree ref={tree}>
        {TREE.map((node, i) => (
          <TreeItem key={i} node={node} />
        ))}
      </MapTree>
    </MapFrame>
  );
}

function ColorSwatch({ ext }: { ext: string }) {
  const canvas = useRef<HTMLCanvasElement>(null);
  useLayoutEffect(() => {
    const ctx = canvas.current!.getContext("2d")!;
    const image = ctx.createImageData(74, 30);
    const box = { x: 0, y: 0, w: 74, h: 30 };
    shade(image.data, 74, box, addRidge([0, 0, 0, 0], box, HEIGHT * SCALE), colorOf(ext));
    ctx.putImageData(image, 0, 0);
  }, [ext]);
  return <Swatch ref={canvas} width={74} height={30} />;
}

const Chevron = ({ open }: { open?: boolean }) => (
  <svg width="18" height="18" viewBox="0 0 18 18" fill="none" stroke="#555" strokeWidth="2">
    <path d={open ? "M1 5l8 8 8-8" : "M5 1l8 8-8 8"} />
  </svg>
);

function DuplicateList() {
  return (
    <Table>
      <colgroup>
        <Col $width={1000} />
        <Col $width={140} />
        <Col $width={160} />
        <Col />
      </colgroup>
      <thead>
        <tr>
          <Head>Hash Prefix / Name</Head>
          <Head $right>
            Items
            <SortMark $at="calc(100% - 7px)" width="8" height="8" viewBox="0 0 8 8">
              <path d="M0 0l7 7" stroke="#444" />
            </SortMark>
          </Head>
          <Head $right>Logical Size</Head>
          <Head>Last Change</Head>
        </tr>
      </thead>
      <tbody>
        {ENTRIES.map((entry) => {
          const selected = entry.level === 0;
          return (
            <tr key={entry.name}>
              <NameCell>
                <NameLine $level={entry.level}>
                  {entry.level === 1 && (
                    <Toggle aria-label={entry.open ? "Collapse" : "Expand"}>
                      <Chevron open={entry.open} />
                    </Toggle>
                  )}
                  <IconSlot $wide={entry.level !== 2}>{ENTRY_ICONS[entry.icon]}</IconSlot>
                  <NameText $selected={selected}>{entry.name}</NameText>
                </NameLine>
              </NameCell>
              <Cell $right $selected={selected}>
                {entry.items}
              </Cell>
              <Cell $right $selected={selected}>
                {entry.size}
              </Cell>
              <Cell $selected={selected}>{entry.changed}</Cell>
            </tr>
          );
        })}
      </tbody>
    </Table>
  );
}

function ExtensionList() {
  return (
    <ExtTable>
      <colgroup>
        <Col $width={119} />
        <Col $width={80} />
        <Col $width={131} />
        <Col $width={100} />
      </colgroup>
      <thead>
        <tr>
          <Head>Extension</Head>
          <Head>Color</Head>
          <Head $right>
            Bytes
            <SortMark $at="58px" width="14" height="8" viewBox="0 0 14 8">
              <path d="M1 0l6 7 6-7" fill="none" stroke="#444" />
            </SortMark>
          </Head>
          <Head $right>% Bytes</Head>
        </tr>
      </thead>
      <tbody>
        {EXTENSIONS.map(([ext, icon, bytes, share]) => (
          <tr key={ext}>
            <Cell>
              <ExtName>
                {EXT_ICONS[icon]}
                <span>{bytes && `.${ext}`}</span>
              </ExtName>
            </Cell>
            <SwatchCell>
              <ColorSwatch ext={ext} />
            </SwatchCell>
            <Cell $right>{bytes}</Cell>
            <Cell $right>{share}</Cell>
          </tr>
        ))}
      </tbody>
    </ExtTable>
  );
}

export default function App() {
  return (
    <>
      <GlobalStyle />
      <Desktop>
        <Window>
          <TitleBar>
            <LogoIcon />
            <Title>{"WinDirStat 2.9.0 - V:\\Demo\\Localized\\en-us\\Demo data\\"}</Title>
            <CaptionButtons>
              <CaptionButton aria-label="Minimize">
                <svg width="20" height="20" viewBox="0 0 20 20" stroke="#000" strokeWidth="2">
                  <path d="M0 10h20" />
                </svg>
              </CaptionButton>
              <CaptionButton aria-label="Maximize">
                <svg width="20" height="20" viewBox="0 0 20 20" fill="none" stroke="#000" strokeWidth="2">
                  <rect x="1" y="1" width="18" height="18" rx="2" />
                </svg>
              </CaptionButton>
              <CaptionButton aria-label="Close">
                <svg width="20" height="20" viewBox="0 0 20 20" stroke="#000" strokeWidth="2">
                  <path d="M0 0l20 20M20 0L0 20" />
                </svg>
              </CaptionButton>
            </CaptionButtons>
          </TitleBar>
          <MenuBar>
            {["File", "Edit", "Clean Up", "View", "Tools", "Options", "Help"].map((name) => (
              <MenuItem key={name}>{name}</MenuItem>
            ))}
          </MenuBar>
          <Toolbar>
            {TOOL_GROUPS.map((names) => (
              <React.Fragment key={names[0]}>
                {names.map((name) => (
                  <ToolButton key={name} aria-label={name}>
                    {TOOL_ICONS[name]}
                  </ToolButton>
                ))}
                <Divider />
              </React.Fragment>
            ))}
          </Toolbar>
          <Workspace>
            <Panes>
              <Pane>
                <ListArea>
                  <DuplicateList />
                </ListArea>
                <Tabs>
                  <Tab>All Files</Tab>
                  <Tab>Largest Files</Tab>
                  <Tab $active>Duplicate Files</Tab>
                </Tabs>
              </Pane>
              <Pane>
                <ExtBody>
                  <ExtScroller>
                    <ExtensionList />
                  </ExtScroller>
                  <ScrollTrack>
                    <ScrollThumb />
                  </ScrollTrack>
                </ExtBody>
              </Pane>
            </Panes>
            <Treemap />
          </Workspace>
          <StatusBar>
            <StatusCell>{"V:\\Demo\\Localized\\en-us\\Demo data"}</StatusCell>
            <StatusCell $line>Logical Size: ∑ 7.92 GiB</StatusCell>
            <StatusCell $line>Memory Usage: 28.67 MiB</StatusCell>
          </StatusBar>
        </Window>
      </Desktop>
    </>
  );
}
